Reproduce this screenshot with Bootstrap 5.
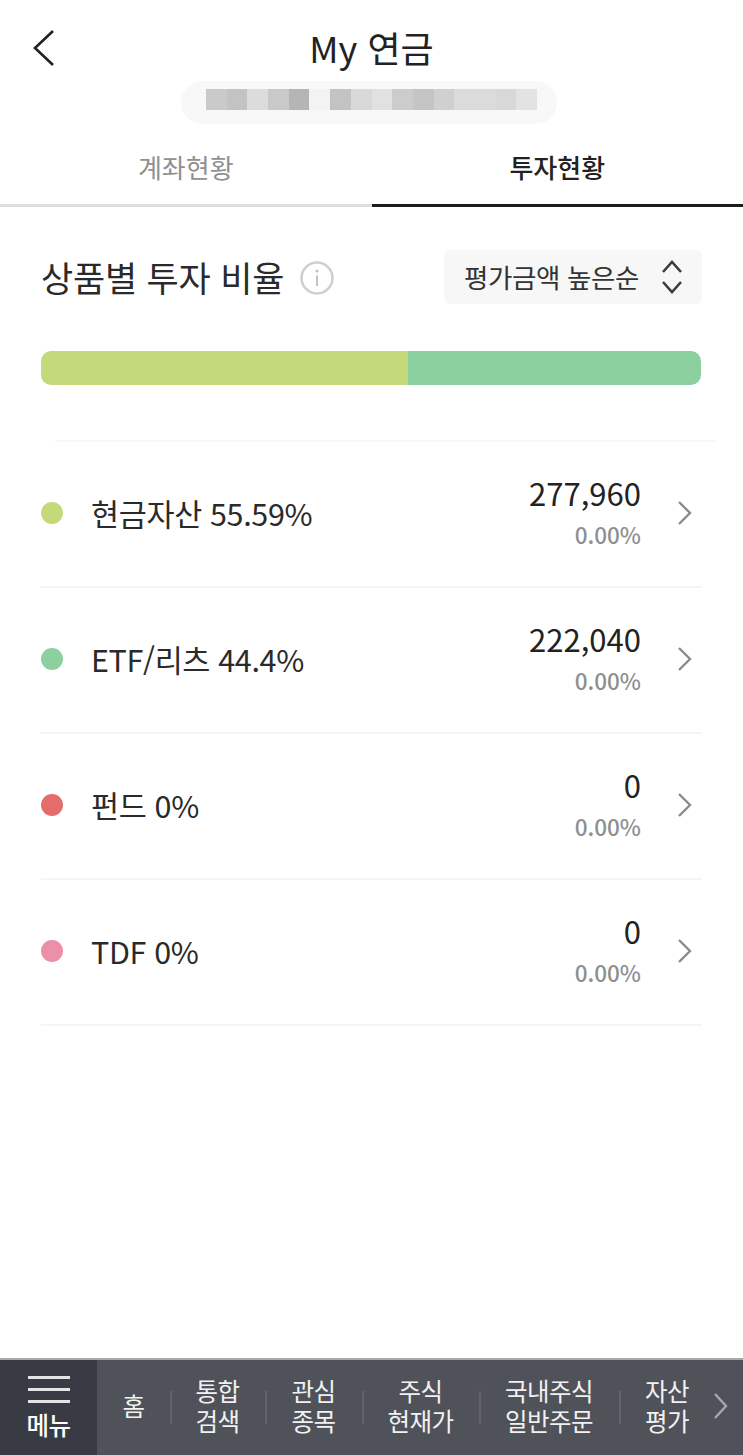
<!DOCTYPE html>
<html lang="ko">

    <head>
        <meta charset="UTF-8">
        <meta name="viewport" content="width=device-width, initial-scale=1.0">
        <title>My 연금</title>
        <link href="https://cdn.jsdelivr.net/npm/bootstrap@5.3.2/dist/css/bootstrap.min.css" rel="stylesheet">
        <style>
            html, body {
                height: 100%;
            }

            body {
                font-family: "Noto Sans CJK KR", "Noto Sans", sans-serif;
                font-weight: 400;
                color: #222;
                background: #fff;
            }

            .app-page {
                width: 743px;
                height: 1455px;
                overflow: hidden;
            }

            .top-head {
                height: 81px;
                padding: 26px 42px 0;
            }

            .back-btn {
                width: 24px;
                height: 38px;
                margin-left: -10px;
                margin-top: 3px;
            }

            .page-title {
                font-size: 36px;
                line-height: 42px;
                margin-right: 14px;
                font-weight: 400;
            }

            .blur-pill {
                width: 376px;
                height: 43px;
                margin-left: 181px;
                padding: 8px 20px 0 25px;
                border-radius: 22px;
                background: #f8f8f8;
            }

            .blur-cell {
                width: 20.7px;
                height: 21px;
            }

            .tab-row {
                height: 83px;
            }

            .tab-item {
                width: 50%;
                font-size: 26px;
                line-height: 38px;
                padding-top: 24px;
                text-align: center;
                letter-spacing: 0;
                color: #909090;
                border-bottom: 3px solid #dedede;
            }

            .tab-item.on {
                color: #222;
                font-weight: 500;
                border-bottom-color: #1c1c1c;
            }

            .ratio-head {
                height: 144px;
                padding: 43px 41px 0;
            }

            .ratio-title {
                font-size: 35px;
                line-height: 50px;
                letter-spacing: -.2px;
                font-weight: 400;
                margin: 2px 0 0;
                color: #2a2a2a;
            }

            .sort-btn {
                width: 258px;
                height: 54px;
                padding: 0 18px 0 20px;
                background: #f7f7f7;
                border-radius: 6px;
                font-size: 26.5px;
                letter-spacing: -.4px;
                color: #333;
            }

            .ratio-bar {
                height: 34px;
                margin: 0 42px 55px 41px;
                border-radius: 10px;
                overflow: hidden;
            }

            .bar-part {
                height: 100%;
            }

            .first-rule {
                margin: 0 27px 0 55px;
                border-top: 2px solid #f7f7f7;
            }

            .asset-list {
                padding: 0 41px;
            }

            .asset-row {
                height: 146px;
                padding-bottom: 2px;
                border-bottom: 2px solid #f5f5f5;
            }

            .asset-dot {
                width: 22px;
                height: 22px;
                border-radius: 50%;
                margin-right: 28px;
            }

            .asset-name {
                font-size: 30.5px;
                line-height: 40px;
                letter-spacing: -.35px;
                color: #2a2a2a;
            }

            .asset-value {
                margin-right: 35px;
                text-align: right;
            }

            .asset-amount {
                font-size: 31px;
                line-height: 40px;
                font-weight: 400;
                color: #222;
            }

            .asset-rate {
                font-size: 22.5px;
                line-height: 40px;
                margin-top: 1px;
                font-weight: 500;
                color: #8f8f8f;
            }

            .row-arrow {
                width: 18px;
                height: 28px;
                margin-right: 8px;
                margin-left: 0;
            }

            .bottom-menu {
                height: 97px;
                margin-top: 332px;
                background: #50525a;
                border-top: 2px solid #a9a9a9;
                color: #f1f1f1;
                font-size: 24.5px;
                line-height: 30px;
                text-align: center;
                letter-spacing: -.5px;
            }

            .menu-btn {
                width: 97px;
                background: #383b44;
                padding-top: 16px;
            }

            .menu-lines {
                width: 42px;
                height: 27px;
                border-top: 3px solid #e4e4e4;
                border-bottom: 3px solid #e4e4e4;
                margin: 0 auto 7px;
            }

            .menu-lines::after {
                content: "";
                display: block;
                margin-top: 9px;
                border-top: 3px solid #e4e4e4;
            }

            .menu-btn span {
                font-weight: 500;
                color: #fff;
            }

            .menu-items {
                padding-bottom: 3px;
            }

            .menu-link {
                position: relative;
                flex: none;
            }

            .menu-link + .menu-link::before {
                content: "";
                position: absolute;
                left: 0;
                top: 50%;
                height: 33px;
                margin-top: -15px;
                border-left: 2px solid #62646b;
            }

            .menu-more {
                width: 18px;
                height: 28px;
                margin-left: -3px;
            }
        </style>
    </head>

    <body>

        <div class="app-page d-flex flex-column">

            <div class="top-head d-flex align-items-start flex-shrink-0">
                <svg class="back-btn flex-shrink-0" viewBox="0 0 24 38" fill="none" stroke="#222" stroke-width="2.6">
                    <path d="M21 2 L3 19 L21 36" />
                </svg>
                <div class="page-title flex-grow-1 text-center">My 연금</div>
            </div>

            <div class="blur-pill d-flex flex-shrink-0">
                <div class="blur-cell" style="background:#cacaca"></div>
                <div class="blur-cell" style="background:#c3c3c3"></div>
                <div class="blur-cell" style="background:#dcdcdc"></div>
                <div class="blur-cell" style="background:#c9c9c9"></div>
                <div class="blur-cell" style="background:#b5b5b5"></div>
                <div class="blur-cell" style="background:#f3f3f3"></div>
                <div class="blur-cell" style="background:#c3c3c3"></div>
                <div class="blur-cell" style="background:#d9d9d9"></div>
                <div class="blur-cell" style="background:#e1e1e1"></div>
                <div class="blur-cell" style="background:#cccccc"></div>
                <div class="blur-cell" style="background:#c5c5c5"></div>
                <div class="blur-cell" style="background:#d0d0d0"></div>
                <div class="blur-cell" style="background:#dbdbdb"></div>
                <div class="blur-cell" style="background:#dbdbdb"></div>
                <div class="blur-cell" style="background:#d8d8d8"></div>
                <div class="blur-cell" style="background:#e3e3e3"></div>
            </div>

            <div class="tab-row d-flex flex-shrink-0">
                <div class="tab-item">계좌현황</div>
                <div class="tab-item on">투자현황</div>
            </div>

            <div class="ratio-head d-flex justify-content-between align-items-start flex-shrink-0">
                <div class="d-flex align-items-center">
                    <h2 class="ratio-title">상품별 투자 비율</h2>
                    <svg class="ms-3 mt-1" width="34" height="34" viewBox="0 0 34 34" fill="none">
                        <circle cx="17" cy="17" r="15.5" stroke="#cfcfcf" stroke-width="2.5" />
                        <circle cx="17" cy="10" r="1.6" fill="#c4c4c4" />
                        <path d="M17 14.5 V25" stroke="#c4c4c4" stroke-width="2" />
                    </svg>
                </div>
                <div class="sort-btn d-flex justify-content-between align-items-center">
                    <span>평가금액 높은순</span>
                    <svg width="24" height="36" viewBox="0 0 24 36" fill="none" stroke="#3c3c3c" stroke-width="2.6">
                        <path d="M3 13 L12 3 L21 13" />
                        <path d="M3 23 L12 33 L21 23" />
                    </svg>
                </div>
            </div>

            <div class="ratio-bar d-flex flex-shrink-0">
                <div class="bar-part" style="width:55.59%;background:#c3d97a"></div>
                <div class="bar-part" style="width:44.41%;background:#8cd09f"></div>
            </div>

            <div class="first-rule flex-shrink-0"></div>

            <div class="asset-list flex-shrink-0">
                <div class="asset-row d-flex align-items-center">
                    <div class="asset-dot" style="background:#c3d97a"></div>
                    <div class="asset-name flex-grow-1">현금자산 55.59%</div>
                    <div class="asset-value">
                        <div class="asset-amount">277,960</div>
                        <div class="asset-rate">0.00%</div>
                    </div>
                    <svg class="row-arrow" viewBox="0 0 18 28" fill="none" stroke="#8a8a8a" stroke-width="2.4">
                        <path d="M3 3 L14 14 L3 25" />
                    </svg>
                </div>
                <div class="asset-row d-flex align-items-center">
                    <div class="asset-dot" style="background:#8cd09f"></div>
                    <div class="asset-name flex-grow-1">ETF/리츠 44.4%</div>
                    <div class="asset-value">
                        <div class="asset-amount">222,040</div>
                        <div class="asset-rate">0.00%</div>
                    </div>
                    <svg class="row-arrow" viewBox="0 0 18 28" fill="none" stroke="#8a8a8a" stroke-width="2.4">
                        <path d="M3 3 L14 14 L3 25" />
                    </svg>
                </div>
                <div class="asset-row d-flex align-items-center">
                    <div class="asset-dot" style="background:#e46d6b"></div>
                    <div class="asset-name flex-grow-1">펀드 0%</div>
                    <div class="asset-value">
                        <div class="asset-amount">0</div>
                        <div class="asset-rate">0.00%</div>
                    </div>
                    <svg class="row-arrow" viewBox="0 0 18 28" fill="none" stroke="#8a8a8a" stroke-width="2.4">
                        <path d="M3 3 L14 14 L3 25" />
                    </svg>
                </div>
                <div class="asset-row d-flex align-items-center">
                    <div class="asset-dot" style="background:#ec90aa"></div>
                    <div class="asset-name flex-grow-1">TDF 0%</div>
                    <div class="asset-value">
                        <div class="asset-amount">0</div>
                        <div class="asset-rate">0.00%</div>
                    </div>
                    <svg class="row-arrow" viewBox="0 0 18 28" fill="none" stroke="#8a8a8a" stroke-width="2.4">
                        <path d="M3 3 L14 14 L3 25" />
                    </svg>
                </div>
            </div>

            <div class="bottom-menu d-flex flex-shrink-0">
                <div class="menu-btn flex-shrink-0">
                    <div class="menu-lines"></div>
                    <span>메뉴</span>
                </div>
                <div class="menu-items d-flex align-items-center flex-grow-1">
                    <div class="menu-link" style="width:73px">홈</div>
                    <div class="menu-link" style="width:95px">통합<br>검색</div>
                    <div class="menu-link" style="width:97px">관심<br>종목</div>
                    <div class="menu-link" style="width:117px">주식<br>현재가</div>
                    <div class="menu-link" style="width:140px">국내주식<br>일반주문</div>
                    <div class="menu-link" style="width:96px">자산<br>평가</div>
                    <svg class="menu-more flex-shrink-0" viewBox="0 0 18 28" fill="none" stroke="#a6a7ab" stroke-width="2.4">
                        <path d="M3 2 L14 14 L3 26" />
                    </svg>
                </div>
            </div>

        </div>

        <script src="https://cdn.jsdelivr.net/npm/bootstrap@5.3.2/dist/js/bootstrap.bundle.min.js"></script>

    </body>

</html>
